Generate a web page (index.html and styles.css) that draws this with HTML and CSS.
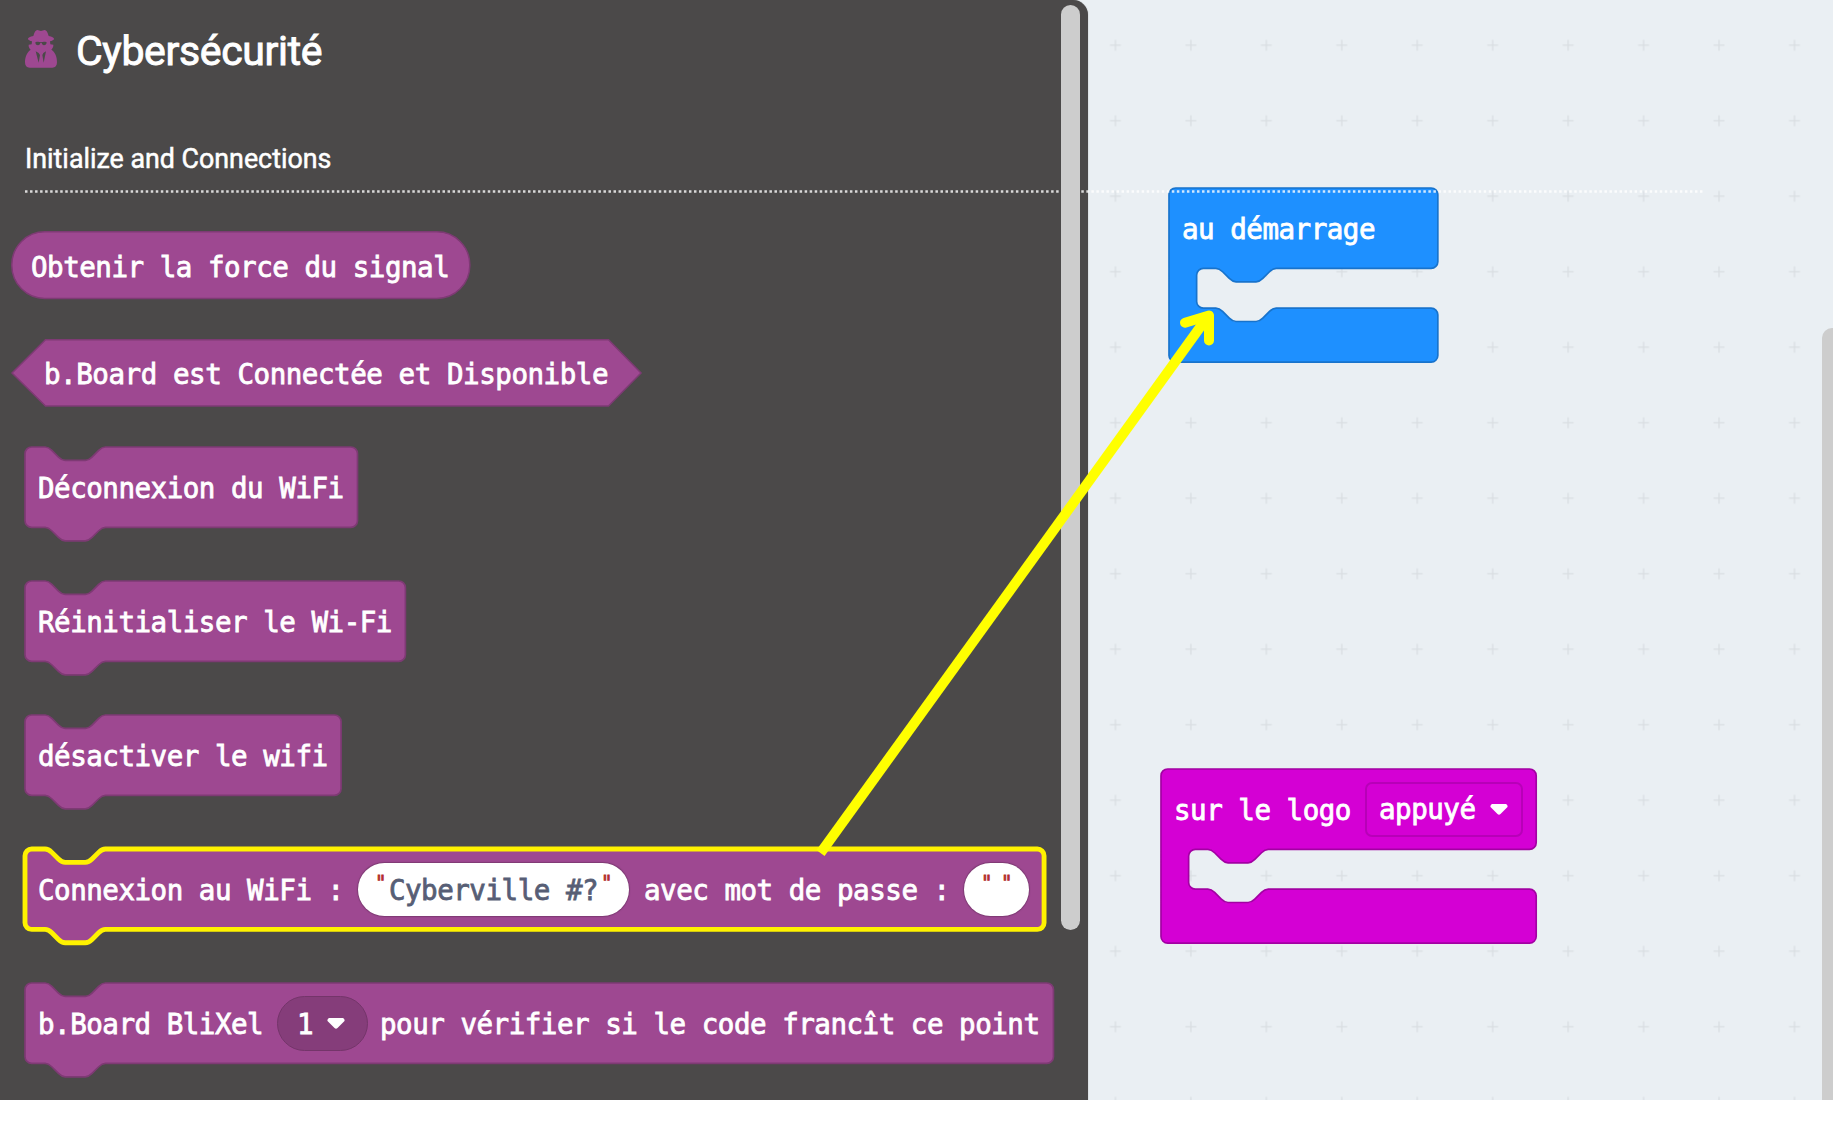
FILE: index.html
```html
<!DOCTYPE html>
<html lang="fr">
<head>
<meta charset="utf-8">
<title>Cybersécurité</title>
<link rel="stylesheet" href="styles.css">
</head>
<body>
<div class="app">
  <aside class="flyout">
    <header class="category">
      <svg class="category-icon" viewBox="0 0 96 113" width="32" height="37.7">
        <path fill="#9e4891" fill-rule="evenodd" d="M25 18C28 6 32 0 37 0c4 0 7 3 11 3S55 0 59 0c5 0 9 6 12 18 10 2 16 5 16 8 0 4-6 6-12 8l1 9 9 1c1 6-3 11-6 15 12 8 17 22 17 38 0 10-5 16-14 16H14C5 113 0 107 0 97c0-16 6-30 17-38-4-4-7-9-6-15l9-1 1-9C15 32 9 30 9 26c0-3 6-6 16-8zM31 37c0 6 3 9 8 9s6-4 7-7h4c1 3 3 7 7 7s8-3 8-9c-8-3-13-1-17 0-4-1-9-3-17 0zM32 64l9 34 4-23-4-6zM63 64l-8 5-3 6 4 23z"/>
      </svg>
      <h1 class="category-title">Cybersécurité</h1>
    </header>
    <h2 class="group-title">Initialize and Connections</h2>
    <svg class="group-rule" width="1678" height="3"><line x1="0" y1="1.5" x2="1678" y2="1.5"/></svg>

    <div class="blocks">
      <div class="block reporter">
        <svg class="shape" width="458" height="67"><rect x="-.2" y=".8" width="458" height="66.6" rx="33"/></svg>
        <div class="row"><span>Obtenir la force du signal</span></div>
      </div>
      <div class="block boolean">
        <svg class="shape" width="629" height="67"><path d="M0 34 33.500.8H596.500L629 34 596.500 67H33.500z"/></svg>
        <div class="row"><span>b.Board est Connectée et Disponible</span></div>
      </div>
      <div class="block statement">
        <svg class="shape" width="333" height="80"><path transform="scale(1.675)" d="M0 4a4 4 0 0 1 4-4H12c2 0 3 1 4 2l4 4c1 1 2 2 4 2h12c2 0 3-1 4-2l4-4c1-1 2-2 4-2H194.5a4 4 0 0 1 4 4V44a4 4 0 0 1-4 4H48c-2 0-3 1-4 2l-4 4c-1 1-2 2-4 2H24c-2 0-3-1-4-2l-4-4c-1-1-2-2-4-2H4a4 4 0 0 1-4-4z"/></svg>
        <div class="row"><span>Déconnexion du WiFi</span></div>
      </div>
      <div class="block statement">
        <svg class="shape" width="381" height="80"><path transform="scale(1.675)" d="M0 4a4 4 0 0 1 4-4H12c2 0 3 1 4 2l4 4c1 1 2 2 4 2h12c2 0 3-1 4-2l4-4c1-1 2-2 4-2H223.1a4 4 0 0 1 4 4V44a4 4 0 0 1-4 4H48c-2 0-3 1-4 2l-4 4c-1 1-2 2-4 2H24c-2 0-3-1-4-2l-4-4c-1-1-2-2-4-2H4a4 4 0 0 1-4-4z"/></svg>
        <div class="row"><span>Réinitialiser le Wi-Fi</span></div>
      </div>
      <div class="block statement">
        <svg class="shape" width="316" height="80"><path transform="scale(1.675)" d="M0 4a4 4 0 0 1 4-4H12c2 0 3 1 4 2l4 4c1 1 2 2 4 2h12c2 0 3-1 4-2l4-4c1-1 2-2 4-2H184.7a4 4 0 0 1 4 4V44a4 4 0 0 1-4 4H48c-2 0-3 1-4 2l-4 4c-1 1-2 2-4 2H24c-2 0-3-1-4-2l-4-4c-1-1-2-2-4-2H4a4 4 0 0 1-4-4z"/></svg>
        <div class="row"><span>désactiver le wifi</span></div>
      </div>
      <div class="block statement selected">
        <svg class="shape" width="1019" height="80"><path transform="scale(1.675)" d="M0 4a4 4 0 0 1 4-4H12c2 0 3 1 4 2l4 4c1 1 2 2 4 2h12c2 0 3-1 4-2l4-4c1-1 2-2 4-2H604.4a4 4 0 0 1 4 4V44a4 4 0 0 1-4 4H48c-2 0-3 1-4 2l-4 4c-1 1-2 2-4 2H24c-2 0-3-1-4-2l-4-4c-1-1-2-2-4-2H4a4 4 0 0 1-4-4z"/></svg>
        <div class="row"><span class="label-wifi">Connexion au WiFi :</span><span class="input ssid"><i class="quote">"</i><span>Cyberville #?</span><i class="quote">"</i></span><span class="label-pass">avec mot de passe :</span><span class="input pass"><i class="quote">"</i><i class="quote">"</i></span></div>
      </div>
      <div class="block statement">
        <svg class="shape" width="1029" height="80"><path transform="scale(1.675)" d="M0 4a4 4 0 0 1 4-4H12c2 0 3 1 4 2l4 4c1 1 2 2 4 2h12c2 0 3-1 4-2l4-4c1-1 2-2 4-2H610a4 4 0 0 1 4 4V44a4 4 0 0 1-4 4H48c-2 0-3 1-4 2l-4 4c-1 1-2 2-4 2H24c-2 0-3-1-4-2l-4-4c-1-1-2-2-4-2H4a4 4 0 0 1-4-4z"/></svg>
        <div class="row"><span class="label-blixel">b.Board BliXel</span><span class="dropdown round"><span>1</span><svg class="caret" width="18" height="11" viewBox="0 0 18 11"><path d="M2 0H16q2 1 1.500 3L10.500 10q-1.500 1.500-3 0L.5 3Q0 1 2 0z"/></svg></span><span>pour vérifier si le code francît ce point</span></div>
      </div>
    </div>
    <div class="flyout-scrollbar"></div>
  </aside>

  <main class="workspace">
    <svg class="grid" width="1833" height="1101">
      <defs><pattern id="cross" x="1077.750" y="7.550" width="75.450" height="75.500" patternUnits="userSpaceOnUse"><path d="M32.200 37.700H43.200M37.700 32.200V43.200" stroke="#d9dee2" stroke-width="1.300"/></pattern></defs>
      <rect width="1833" height="1101" fill="url(#cross)"/>
    </svg>
    <div class="block event start">
      <svg class="shape" width="269" height="175"><path transform="scale(1.675)" d="M0 4a4 4 0 0 1 4-4H156.500a4 4 0 0 1 4 4V44a4 4 0 0 1-4 4H64c-2 0-3 1-4 2l-4 4c-1 1-2 2-4 2H40c-2 0-3-1-4-2l-4-4c-1-1-2-2-4-2H20.500a4 4 0 0 0-4 4V67.700a4 4 0 0 0 4 4H28c2 0 3 1 4 2l4 4c1 1 2 2 4 2H52c2 0 3-1 4-2l4-4c1-1 2-2 4-2H156.500a4 4 0 0 1 4 4V100a4 4 0 0 1-4 4H4a4 4 0 0 1-4-4z"/></svg>
      <div class="row"><span>au démarrage</span></div>
    </div>
    <div class="block event logo">
      <svg class="shape" width="375" height="175"><path transform="scale(1.675)" d="M0 4a4 4 0 0 1 4-4H220a4 4 0 0 1 4 4V44a4 4 0 0 1-4 4H64c-2 0-3 1-4 2l-4 4c-1 1-2 2-4 2H40c-2 0-3-1-4-2l-4-4c-1-1-2-2-4-2H20.500a4 4 0 0 0-4 4V67.700a4 4 0 0 0 4 4H28c2 0 3 1 4 2l4 4c1 1 2 2 4 2H52c2 0 3-1 4-2l4-4c1-1 2-2 4-2H220a4 4 0 0 1 4 4V100a4 4 0 0 1-4 4H4a4 4 0 0 1-4-4z"/></svg>
      <div class="row"><span class="label-logo">sur le logo</span><span class="dropdown square"><span>appuyé</span><svg class="caret" width="18" height="11" viewBox="0 0 18 11"><path d="M2 0H16q2 1 1.500 3L10.500 10q-1.500 1.500-3 0L.5 3Q0 1 2 0z"/></svg></span></div>
    </div>
    <div class="workspace-scrollbar"></div>
  </main>

  <svg class="arrow" width="1833" height="1100">
    <path d="M820.500 853L1207.500 317"/>
    <path class="head" d="M1185 322.700L1209 315.500V340.500"/>
  </svg>
</div>
</body>
</html>
```
FILE: styles.css
```css
* { box-sizing: border-box; }
body { margin: 0; background: #fff; overflow: hidden; }
svg { display: block; }

.app {
  position: relative;
  display: flex;
  height: 1100px;
  overflow: hidden;
  background: #eaeff3;
}

.flyout {
  position: relative;
  z-index: 2;
  flex: none;
  width: 1088px;
  height: 1100px;
  padding: 30px 0 0 25px;
  background: #4b4949;
  border-top-right-radius: 15px;
  box-shadow: 0 0 1px #777;
  color: #fff;
  font-family: Roboto, sans-serif;
}

.category { display: flex; gap: 19px; height: 42px; }
.category-title {
  margin: 0;
  font-size: 41px;
  line-height: 42px;
  font-weight: 400;
  letter-spacing: -0.35px;
  -webkit-text-stroke: 0.9px currentColor;
}
.group-title {
  margin: 69px 0 0;
  font-size: 26.800px;
  line-height: 36px;
  font-weight: 400;
  letter-spacing: 0;
  -webkit-text-stroke: 0.5px currentColor;
}
.group-rule { margin-top: 13px; }
.group-rule line {
  stroke: rgba(255, 255, 255, .8);
  stroke-width: 2.500;
  stroke-dasharray: 2.500 2.530;
}

.blocks { display: flex; flex-direction: column; align-items: flex-start; margin-top: 38px; }
.block {
  display: grid;
  color: #fff;
  font: 27.500px/32px "DejaVu Sans Mono", monospace;
  letter-spacing: -0.47px;
  white-space: pre;
  -webkit-text-stroke: 0.8px currentColor;
}
.shape, .row { grid-area: 1 / 1; }
.shape { overflow: visible; fill: #9e4891; stroke: #7e3a74; stroke-width: 1.500; }
.statement .shape, .event .shape { stroke-width: 1; }
.row { z-index: 1; display: flex; align-items: center; padding-top: 2px; padding-left: 13px; }
.reporter { margin: 0 0 40.500px -13px; }
.reporter .row { padding: 4px 0 0 19px; }
.boolean { margin: 0 0 41px -13px; }
.boolean .row { padding: 3px 0 0 32px; letter-spacing: -0.440px; }
.statement { height: 80.400px; margin-bottom: 53.800px; }
.selected .shape { stroke: #fff200; stroke-width: 2.900; }

.input {
  display: flex;
  justify-content: center;
  align-items: center;
  height: 53px;
  margin-top: -1px;
  border-radius: 27px;
  background: #fff;
  box-shadow: 0 0 1px 1px #7e3a74;
  color: #575e75;
}
.quote {
  align-self: flex-start;
  margin-top: 5px;
  color: #b32d2d;
  font: 19px/28px "DejaVu Sans Mono", monospace;
}
.label-wifi { width: 320px; }
.label-pass { width: 320px; }
.ssid { width: 271px; gap: 3px; margin-right: 15px; }
.pass { width: 65px; gap: 9px; }

.label-blixel { width: 239px; }
.dropdown { display: flex; align-items: center; height: 55px; margin-top: -1px; }
.caret { fill: #fff; }
.round {
  gap: 14px;
  width: 91px;
  margin-right: 12px;
  padding-left: 19px;
  border: 1px solid #74356a;
  border-radius: 28px;
  background: #853d7a;
}

.workspace { flex: 1; }
.grid { position: absolute; left: 0; top: 0; }
.event { position: absolute; }
.event .row { height: 80px; padding-left: 13px; }
.start { left: 1169px; top: 187.500px; }
.start .shape { fill: #1e90ff; stroke: #1873cc; }
.logo { left: 1161px; top: 768.500px; }
.logo .shape { fill: #d400d4; stroke: #a300a3; }
.label-logo { width: 191px; }
.square {
  gap: 14px;
  width: 158px;
  padding-left: 12px;
  border: 2px solid #b800b8;
  border-radius: 7px;
}

.flyout-scrollbar {
  position: absolute;
  left: 1060.500px;
  top: 4.500px;
  width: 19px;
  height: 925px;
  border-radius: 10px;
  background: #cdcdcd;
}
.workspace-scrollbar {
  position: absolute;
  left: 1822px;
  top: 328px;
  width: 22px;
  height: 790px;
  border-radius: 10px;
  background: #cdcdcd;
}

.arrow { position: absolute; z-index: 3; left: 0; top: 0; fill: none; stroke: #ff0; stroke-width: 10; }
.head { stroke-linecap: round; stroke-linejoin: round; }
```
